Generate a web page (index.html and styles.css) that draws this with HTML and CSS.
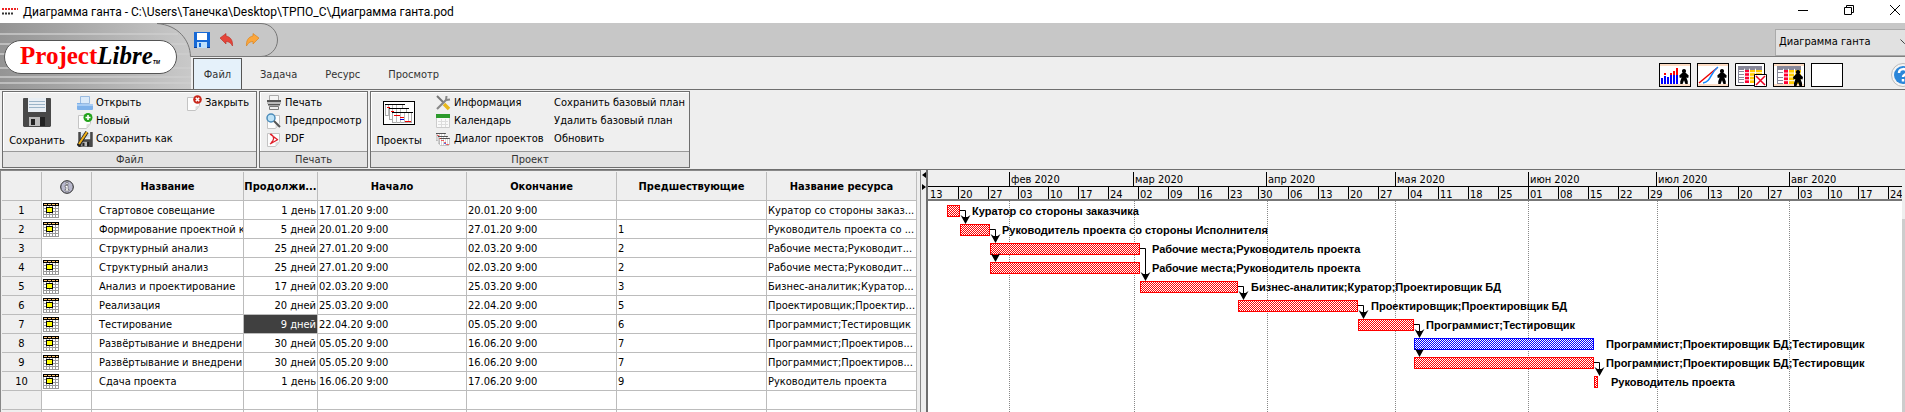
FILE: index.html
```html
<!DOCTYPE html>
<html lang="ru">
<head>
<meta charset="utf-8">
<title>Диаграмма ганта</title>
<link rel="stylesheet" href="styles.css">
</head>
<body>
<svg class="defs" aria-hidden="true">
  <symbol id="cal" viewBox="0 0 16 16"><g shape-rendering="crispEdges"><path fill="#fff" d="M0 3h16v12H0z"/><path fill="#999" d="M0 3h1v12H0zM3 3h1v12H3zM6 3h1v12H6zM9 3h1v12H9zM12 3h1v12h-1zM15 3h1v12h-1zM0 5h16v1H0zM0 8h16v1H0zM0 11h16v1H0zM0 14h16v1H0z"/><path d="M0 0h16v3H0z"/><path fill="#ffc878" d="M1 1h3v1H1zM5 1h3v1H5zM9 1h3v1H9zM13 1h2v1h-2z"/><path d="M3 4h7v6H3z"/><path fill="#ff0" d="M4 5h5v4H4z"/></g></symbol>
  <symbol id="gantts" viewBox="0 0 32 24"><g shape-rendering="crispEdges"><path fill="#fff" stroke="#aaa" d="M2.500 3.500h17v11h-17z"/><path stroke="#bbb" d="M5.500 4v11M9.500 4v11M13.500 4v11"/><path stroke="#000" d="M2 3.500h20"/><path fill="#fff" stroke="#aaa" d="M6.500 7.500h17v11h-17z"/><path stroke="#bbb" d="M9.500 8v11M13.500 8v11M17.500 8v11"/><path stroke="#000" d="M6 7.500h20"/><path fill="#fff" stroke="#aaa" d="M9.500 11.500h19v10h-19z"/><path stroke="#bbb" d="M13.500 12v10M17.500 12v10M21.500 12v10M25.500 12v10"/><path stroke="#000" stroke-width="1" d="M9 11.500h21"/><path stroke="#e00" stroke-width="1" d="M4 6.500h3M8 10.500h3M11 14.500h6M17 16.500h4M22 20.500h6"/><path stroke="#00d" d="M17 18.500h4"/></g></symbol>
  <symbol id="man" viewBox="0 0 10 16"><path d="M5 0a2.200 2.200 0 0 1 1.500 3.800L10 7 9.500 9.500 7.500 9 9 13v3H6.500L5 12l-1.500 4H1v-3l1.500-4-2 .5L0 7l3.500-3.200A2.200 2.200 0 0 1 5 0z"/></symbol>
  <symbol id="sheet" viewBox="0 0 24 19" preserveAspectRatio="none"><g shape-rendering="crispEdges"><path fill="#889" d="M0 0h24v19H0z"/><path fill="#fff" d="M1 4h5v2H1zM1 7h5v2H1zM1 10h5v2H1zM1 13h5v2H1zM1 16h5v2H1z"/><path fill="#f03" d="M7 4h4v15H7z"/><path fill="#fc0" d="M12 4h5v15h-5zM18 4h6v15h-6z"/><path stroke="#fff" d="M6.500 3v16M11.500 3v16M17.500 3v16M7 7.500h17M7 11.500h17M7 15.500h17"/></g></symbol>
  <symbol id="page" viewBox="0 0 16 16"><path fill="#fdfdfd" stroke="#c4c4c4" d="M1.500 2.500h12v8l-4 5h-8z"/><path fill="#ddd" d="M13.500 10.500l-4 5v-4z"/></symbol>
  <symbol id="floppy" viewBox="0 0 28 29"><path fill="#484848" d="M0 1q0-1 1-1h26q1 0 1 1v27l-1 1H1l-1-1z"/><path fill="#e8eef4" d="M5 0h18v14H5z"/><path stroke="#9bb4c8" d="M6 3.500h16M6 6.500h16M6 9.500h16"/><path fill="#bbb" d="M6 19h16v9H6z"/><path fill="#222" d="M8 21h4v6H8zM17 19h5v9h-5z"/></symbol>
</svg>

<header class="titlebar">
  <svg class="appicon" viewBox="0 0 16 10"><path stroke="#e22" stroke-width="2" stroke-dasharray="2 1" d="M0 2h16"/><path stroke="#333" stroke-dasharray="2 1" stroke-width="2" d="M0 6.500h12"/></svg>
  <h1 class="title">Диаграмма ганта - C:\Users\Танечка\Desktop\ТРПО_С\Диаграмма ганта.pod</h1>
  <div class="winbtns">
    <button class="winbtn" aria-label="Свернуть"><svg viewBox="0 0 12 12"><path d="M1 6.500h10"/></svg></button>
    <button class="winbtn" aria-label="Развернуть"><svg viewBox="0 0 12 12"><path d="M1.500 3.500h7v7h-7zM3.500 3V1.500h7v7H9"/></svg></button>
    <button class="winbtn" aria-label="Закрыть"><svg viewBox="0 0 12 12"><path d="M1 1l10 10M11 1L1 11"/></svg></button>
  </div>
</header>

<div class="masthead">
  <svg class="corner" viewBox="0 0 280 66" width="280" height="66" aria-hidden="true">
    <defs><linearGradient id="metal"><stop offset="0" stop-color="#949494"/><stop offset="1" stop-color="#c9c9c9"/></linearGradient></defs>
    <path fill="#c7c7c7" d="M157 .5H261a16.500 16.500 0 0 1 0 33H191Z"/>
    <path fill="url(#metal)" d="M0 0H157C178 2 190 17 191 34V66H0Z"/>
    <path stroke="#cfcfcf" stroke-width="2" opacity=".7" d="M0 11h178M0 21h186M0 31h190M0 45h191M0 54h191M0 60h191"/>
    <path fill="none" stroke="#777" d="M157 .5C178 2 190 17 190.500 33.500H261a16.500 16.500 0 0 0 0-33H157"/>
  </svg>
  <div class="brand"><span class="red">Project</span><span class="ital">Libre</span><small>TM</small></div>
  <div class="bars">
    <div class="quickbar">
      <button class="ico" aria-label="Сохранить"><svg viewBox="0 0 16 16"><path fill="#1769d6" d="M0 0h16v16H0z"/><path fill="#0a3f9b" d="M0 15h16v1H0z"/><path fill="#fff" d="M3 1h10v7H3z"/><path fill="#bfe0fb" d="M3 10h10v6H3z"/><path fill="#1769d6" d="M5 11h2v4H5z"/></svg></button>
      <button class="ico" aria-label="Отменить"><svg viewBox="0 0 16 16"><path fill="#e5453a" stroke="#b92a20" stroke-width=".6" d="M1 6L7 1.500v2.500c5 1 7 5 6.500 10-1.500-3-3.500-4.500-6.500-4.500v2.500z"/></svg></button>
      <button class="ico" aria-label="Повторить"><svg viewBox="0 0 16 16"><path fill="#fba63c" stroke="#d97e12" stroke-width=".6" d="M15 6L9 1.500v2.500C4 5 2 9 2.500 14c1.500-3 3.500-4.500 6.500-4.500v2.500z"/></svg></button>
      <select class="view" aria-label="Вид"><option>Диаграмма ганта</option></select>
    </div>
    <nav class="tabs">
      <button class="tab on">Файл</button><button class="tab">Задача</button><button class="tab">Ресурс</button><button class="tab">Просмотр</button>
      <div class="views">
        <button class="pic" aria-label="Гистограмма"><svg viewBox="0 0 32 24"><path fill="#fff" stroke="#000" stroke-width="2" d="M0 0h32v24H0z"/><path fill="#fcdcc4" d="M1 1h30v2H1zM1 21h30v2H1z"/><path stroke="#00f" stroke-width="2" d="M3 21v-6M6 21v-8M9 21v-7M12 21v-9M15 21v-9M18 21v-9"/><path stroke="#f00" stroke-width="2" d="M6 12v-2M12 12v-2M15 12v-4M18 12V5"/><use href="#man" x="20" y="6" width="10" height="15"/></svg></button>
        <button class="pic" aria-label="Графики"><svg viewBox="0 0 32 24"><path fill="#fff" stroke="#000" stroke-width="2" d="M0 0h32v24H0z"/><path fill="#fcdcc4" d="M1 1h30v2H1zM1 21h30v2H1z"/><path fill="none" stroke="#e00" stroke-width="1.500" d="M2 20L20 5"/><path fill="none" stroke="#18f" stroke-width="1.500" d="M6 20c8-1 7-10 15-16"/><use href="#man" x="20" y="6" width="10" height="15"/></svg></button>
        <button class="pic" aria-label="Скрыть таблицу"><svg viewBox="0 0 32 24"><path fill="#fff" stroke="#000" d="M.5.5h29v22H.5z"/><use href="#sheet" x="3" y="3" width="24" height="17"/><path fill="#fff" stroke="#000" d="M19.500 11.500h12v12h-12z"/><path stroke="#e02" stroke-width="1.500" d="M21 13l9 9M30 13l-9 9"/></svg></button>
        <button class="pic" aria-label="Ресурсы"><svg viewBox="0 0 32 24"><path fill="#fff" stroke="#000" stroke-width="2" d="M0 0h32v24H0z"/><path fill="#fcdcc4" d="M1 1h30v2H1zM1 21h30v2H1z"/><use href="#sheet" x="4" y="3" width="24" height="18"/><use href="#man" x="20" y="7" width="10" height="16"/></svg></button>
        <button class="pic" aria-label="Пусто"><svg viewBox="0 0 32 24"><path fill="#fff" stroke="#000" stroke-width="2" d="M0 0h32v24H0z"/></svg></button>
        <button class="help" aria-label="Справка"><svg viewBox="0 0 24 24"><circle cx="12" cy="12" r="11.500" fill="#f4f4f4" stroke="#bbb"/><circle cx="12" cy="12" r="9" fill="#2b86d9"/><path fill="none" stroke="#fff" stroke-width="2.500" d="M8 10c0-5 8-5 8-1 0 3-4 2-4 5M12 16v2.500"/></svg></button>
      </div>
    </nav>
  </div>
</div>

<div class="ribbon">
  <section class="group">
    <div class="tools">
      <button class="big save"><svg width="28" height="29"><use href="#floppy"/></svg>Сохранить</button>
      <div class="col open">
        <button class="cmd"><svg viewBox="0 0 16 16"><path fill="#dcebfa" stroke="#9bbbe0" d="M3.500 1.500h9v7h-9z"/><path fill="#7fb2ea" d="M0 8h4l1 1h11v5q0 1-1 1H1q-1 0-1-1z"/><path fill="#a9cdf4" d="M0 9h16v2H0z"/></svg>Открыть</button>
        <button class="cmd"><svg viewBox="0 0 16 16"><use href="#page"/><circle cx="11" cy="4.500" r="4.500" fill="#23a31c"/><path stroke="#fff" stroke-width="1.600" d="M11 2v5M8.500 4.500h5"/></svg>Новый</button>
        <button class="cmd"><svg viewBox="0 0 16 16"><use href="#floppy" x="1" y="1" width="15" height="15"/><path stroke="#222" stroke-width="3.500" d="M1 15L10 1"/><path stroke="#f2b21b" stroke-width="2" d="M2 13L10 1"/></svg>Сохранить как</button>
      </div>
      <div class="col">
        <button class="cmd"><svg viewBox="0 0 16 16"><use href="#page"/><circle cx="11.500" cy="4.500" r="4.300" fill="#c8281c"/><path stroke="#fff" stroke-width="1.600" d="M9.800 2.800l3.400 3.400M13.200 2.800L9.800 6.200"/></svg>Закрыть</button>
      </div>
    </div>
    <h2 class="caption">Файл</h2>
  </section>
  <section class="group">
    <div class="tools print">
      <div class="col">
        <button class="cmd"><svg viewBox="0 0 16 16"><path fill="#f4f4f4" stroke="#aaa" d="M3.500.5h9v5h-9z"/><path fill="#555" d="M1 5h14v2H1zM2 9h12v1.500H2z"/><path fill="#bbb" d="M1 7h14v2H1z"/><path fill="#eee" stroke="#777" d="M3.500 11.500h9v3h-9z"/></svg>Печать</button>
        <button class="cmd"><svg viewBox="0 0 16 16"><use href="#page"/><circle cx="5" cy="5" r="4" fill="#bfe3f7" stroke="#4b8cba" stroke-width="1.500"/><path stroke="#555" stroke-width="2" d="M8 8l6 6"/></svg>Предпросмотр</button>
        <button class="cmd"><svg viewBox="0 0 16 16"><use href="#page"/><path fill="none" stroke="#e0202a" stroke-width="1.300" d="M4 3l8 6M12 8.500L4 13M5 3c4 3 3 6 0 9"/></svg>PDF</button>
      </div>
    </div>
    <h2 class="caption">Печать</h2>
  </section>
  <section class="group">
    <div class="tools project">
      <button class="big proj"><svg width="32" height="24" viewBox="0 0 32 24"><path fill="#fff" stroke="#000" stroke-width="2" d="M0 0h32v24H0z"/><use href="#gantts"/></svg>Проекты</button>
      <div class="col info">
        <button class="cmd"><svg viewBox="0 0 16 16"><path stroke="#777" stroke-width="2" d="M2 1l7 7"/><path stroke="#e8b81c" stroke-width="3.500" d="M9 9l5 5"/><path stroke="#888" stroke-width="2.200" d="M2 14L12 4"/><path fill="none" stroke="#888" stroke-width="2" d="M11.500 1L11 5l4-.5"/></svg>Информация</button>
        <button class="cmd"><svg viewBox="0 0 16 16"><path fill="#fafafa" stroke="#ccc" d="M1.500 2.500h13v12h-13z"/><path fill="#2c9a2c" d="M1 1h14v4H1z"/><path stroke="#ddd" d="M3 8.500h10M3 11.500h10M6.500 6v8M10.500 6v8"/></svg>Календарь</button>
        <button class="cmd"><svg viewBox="0 0 32 24" preserveAspectRatio="none"><use href="#gantts"/></svg>Диалог проектов</button>
      </div>
      <div class="col">
        <button class="cmd">Сохранить базовый план</button>
        <button class="cmd">Удалить базовый план</button>
        <button class="cmd">Обновить</button>
      </div>
    </div>
    <h2 class="caption">Проект</h2>
  </section>
</div>

<main class="work">
  <div class="sheetpane">
  <table class="sheet">
    <colgroup><col class="c-num"><col class="c-ind"><col class="c-name"><col class="c-dur"><col class="c-start"><col class="c-wide"><col class="c-wide"><col class="c-wide"></colgroup>
    <thead><tr><th></th><th><svg class="inf" viewBox="0 0 14 14"><circle cx="7" cy="7" r="6.300" fill="#b8b8cc" stroke="#222"/><path fill="#fff" stroke="#555" stroke-width=".6" d="M6 2.500h2v2H6zM5 5.500h3v4h1v1.500H5V9.500h1V7H5z"/></svg></th><th>Название</th><th class="tight">Продолжи...</th><th>Начало</th><th>Окончание</th><th>Предшествующие</th><th>Название ресурса</th></tr></thead>
    <tbody>
    <tr><th>1</th><td><svg class="cal"><use href="#cal"/></svg></td><td class="name">Стартовое совещание</td><td class="dur">1 день</td><td>17.01.20 9:00</td><td>20.01.20 9:00</td><td></td><td>Куратор со стороны заказ...</td></tr>
    <tr><th>2</th><td><svg class="cal"><use href="#cal"/></svg></td><td class="name">Формирование проектной к</td><td class="dur">5 дней</td><td>20.01.20 9:00</td><td>27.01.20 9:00</td><td>1</td><td>Руководитель проекта со ...</td></tr>
    <tr><th>3</th><td></td><td class="name">Структурный анализ</td><td class="dur">25 дней</td><td>27.01.20 9:00</td><td>02.03.20 9:00</td><td>2</td><td>Рабочие места;Руководит...</td></tr>
    <tr><th>4</th><td><svg class="cal"><use href="#cal"/></svg></td><td class="name">Структурный анализ</td><td class="dur">25 дней</td><td>27.01.20 9:00</td><td>02.03.20 9:00</td><td>2</td><td>Рабочие места;Руководит...</td></tr>
    <tr><th>5</th><td><svg class="cal"><use href="#cal"/></svg></td><td class="name">Анализ и проектирование</td><td class="dur">17 дней</td><td>02.03.20 9:00</td><td>25.03.20 9:00</td><td>3</td><td>Бизнес-аналитик;Куратор...</td></tr>
    <tr><th>6</th><td><svg class="cal"><use href="#cal"/></svg></td><td class="name">Реализация</td><td class="dur">20 дней</td><td>25.03.20 9:00</td><td>22.04.20 9:00</td><td>5</td><td>Проектировщик;Проектир...</td></tr>
    <tr><th>7</th><td><svg class="cal"><use href="#cal"/></svg></td><td class="name">Тестирование</td><td class="dur sel">9 дней</td><td>22.04.20 9:00</td><td>05.05.20 9:00</td><td>6</td><td>Программист;Тестировщик</td></tr>
    <tr><th>8</th><td><svg class="cal"><use href="#cal"/></svg></td><td class="name">Развёртывание и внедрени</td><td class="dur">30 дней</td><td>05.05.20 9:00</td><td>16.06.20 9:00</td><td>7</td><td>Программист;Проектиров...</td></tr>
    <tr><th>9</th><td><svg class="cal"><use href="#cal"/></svg></td><td class="name">Развёртывание и внедрени</td><td class="dur">30 дней</td><td>05.05.20 9:00</td><td>16.06.20 9:00</td><td>7</td><td>Программист;Проектиров...</td></tr>
    <tr><th>10</th><td><svg class="cal"><use href="#cal"/></svg></td><td class="name">Сдача проекта</td><td class="dur">1 день</td><td>16.06.20 9:00</td><td>17.06.20 9:00</td><td>9</td><td>Руководитель проекта</td></tr>
    <tr><th></th><td></td><td></td><td></td><td></td><td></td><td></td><td></td></tr>
    <tr><th></th><td></td><td></td><td></td><td></td><td></td><td></td><td></td></tr>
    </tbody>
  </table>
  </div>
  <div class="split"><svg viewBox="0 0 4 18" width="4" height="18"><path d="M4 0v6L0 3zM0 12v6l4-3z"/></svg></div>
  <section class="gantt">
    <div class="chart">
      <div class="scale">
        <div class="months"><span class="m-lead"></span><span class="m-feb">фев 2020</span><span class="m-mar">мар 2020</span><span class="m-apr">апр 2020</span><span class="m-may">мая 2020</span><span class="m-jun">июн 2020</span><span class="m-jul">июл 2020</span><span class="m-aug">авг 2020</span></div>
        <div class="weeks"><span>13</span><span>20</span><span>27</span><span>03</span><span>10</span><span>17</span><span>24</span><span>02</span><span>09</span><span>16</span><span>23</span><span>30</span><span>06</span><span>13</span><span>20</span><span>27</span><span>04</span><span>11</span><span>18</span><span>25</span><span>01</span><span>08</span><span>15</span><span>22</span><span>29</span><span>06</span><span>13</span><span>20</span><span>27</span><span>03</span><span>10</span><span>17</span><span>24</span></div>
      </div>
      <svg class="plot" width="974" height="211" viewBox="0 0 974 211">
        <defs>
          <pattern id="hr" width="2" height="2" patternUnits="userSpaceOnUse"><path fill="#fff" d="M0 0h2v2H0z"/><path fill="#f00" d="M0 0h1v1H0zM1 1h1v1H1z" shape-rendering="crispEdges"/></pattern>
          <pattern id="hb" width="2" height="2" patternUnits="userSpaceOnUse"><path fill="#fff" d="M0 0h2v2H0z"/><path fill="#00f" d="M0 0h1v1H0zM1 1h1v1H1z" shape-rendering="crispEdges"/></pattern>
          <path id="arr" d="M-5-7L-2-5H2L5-7L0 2Z"/>
        </defs>
        <path class="grid" d="M81.500 0v211M206.500 0v211M339.500 0v211M467.500 0v211M600.500 0v211M729.500 0v211M861.500 0v211"/>
        <g class="bar">
          <rect x="19.500" y="4.500" width="12" height="11"/>
          <rect x="32.500" y="23.500" width="29" height="11"/>
          <rect x="62.500" y="42.500" width="149" height="11"/>
          <rect x="62.500" y="61.500" width="149" height="11"/>
          <rect x="212.500" y="80.500" width="97" height="11"/>
          <rect x="310.500" y="99.500" width="119" height="11"/>
          <rect x="430.500" y="118.500" width="55" height="11"/>
          <rect class="free" x="486.500" y="137.500" width="179" height="11"/>
          <rect x="486.500" y="156.500" width="179" height="11"/>
          <rect x="666.500" y="175.500" width="3" height="11"/>
        </g>
        <path class="link" d="M32 9.500h5.500v12M62 28.500h5.500v12M67.500 54v6M212 47.500h5.500v30M310 85.500h5.500v12M430 104.500h5.500v12M486 123.500h5.500v12M491.500 149v6M666 161.500h5.500v12"/>
        <use href="#arr" x="37.500" y="21"/><use href="#arr" x="67.500" y="40"/><use href="#arr" x="67.500" y="59"/><use href="#arr" x="217.500" y="78"/><use href="#arr" x="315.500" y="97"/><use href="#arr" x="435.500" y="116"/><use href="#arr" x="491.500" y="135"/><use href="#arr" x="491.500" y="154"/><use href="#arr" x="671.500" y="173"/>
        <g class="lab">
          <text x="44" y="14">Куратор со стороны заказчика</text>
          <text x="74" y="33">Руководитель проекта со стороны Исполнителя</text>
          <text x="224" y="52">Рабочие места;Руководитель проекта</text>
          <text x="224" y="71">Рабочие места;Руководитель проекта</text>
          <text x="323" y="90">Бизнес-аналитик;Куратор;Проектировщик БД</text>
          <text x="443" y="109">Проектировщик;Проектировщик БД</text>
          <text x="498" y="128">Программист;Тестировщик</text>
          <text x="678" y="147">Программист;Проектировщик БД;Тестировщик</text>
          <text x="678" y="166">Программист;Проектировщик БД;Тестировщик</text>
          <text x="683" y="185">Руководитель проекта</text>
        </g>
      </svg>
    </div>
    <div class="scroll"></div>
  </section>
</main>
</body>
</html>
```
FILE: styles.css
```css
* { box-sizing: border-box; }
html, body { height: 100%; }
body {
  margin: 0;
  display: flex;
  flex-direction: column;
  overflow: hidden;
  background: #eee;
  color: #000;
  font: 11px/16px "DejaVu Sans Condensed", "Noto Sans", sans-serif;
}
.defs { position: absolute; width: 0; height: 0; }
svg { display: block; flex: none; }
button, select { font: inherit; color: inherit; border: 0; padding: 0; background: none; }
h1, h2 { margin: 0; font-weight: normal; }

.titlebar { display: flex; align-items: center; height: 23px; padding-left: 2px; background: #fff; flex: none; }
.appicon { width: 16px; height: 10px; }
.title { flex: 1; padding: 1px 0 0 5px; font: 12px/22px Roboto, "Noto Sans", sans-serif; }
.winbtns { display: flex; gap: 34px; padding: 0 4px 3px 0; }
.winbtn svg { width: 12px; height: 12px; fill: none; stroke: #000; }

.masthead { position: relative; display: flex; height: 67px; flex: none; border-bottom: 1px solid #6e6e6e; overflow: hidden; }
.corner { position: absolute; left: 0; top: 0; z-index: 1; }
.brand {
  position: relative;
  z-index: 2;
  display: flex;
  align-items: baseline;
  width: 173px;
  height: 34px;
  margin: 17px 15px 0 4px;
  padding-left: 15px;
  border: 1px solid #555;
  border-radius: 17px;
  background: #fff;
  font: bold 25px/30px "Liberation Serif", serif;
  flex: none;
}
.red { color: #f00; }
.ital { font-style: italic; }
.brand small { font: italic bold 5px/8px "Liberation Sans", sans-serif; }
.bars { flex: 1; min-width: 0; display: flex; flex-direction: column; }
.quickbar { display: flex; align-items: center; gap: 9px; height: 34px; padding-left: 2px; background: #c7c7c7; border-bottom: 1px solid #808080; flex: none; }
.ico { position: relative; z-index: 2; }
.ico svg { width: 16px; height: 16px; }
.view {
  appearance: none;
  width: 130px;
  height: 27px;
  margin: 5px 0 0 auto;
  padding-left: 3px;
  border: 1px solid #aaa;
  border-right: 0;
  border-radius: 0;
  background: #e1e1e1 url("data:image/svg+xml,%3Csvg xmlns='http://www.w3.org/2000/svg' width='9' height='6'%3E%3Cpath fill='none' stroke='%23444' d='M.5.5l4 4 4-4'/%3E%3C/svg%3E") no-repeat right -4px center;
}
.tabs { display: flex; flex: 1; padding: 1px 0 0 1px; background: #eee; color: #333; }
.tab { padding: 2px 14px 0; }
.tab.on { width: 49px; margin-right: 4px; padding: 1px 0 0; border: solid #555; border-width: 1px 1px 0; background: #e5f1fa; }
.views { display: flex; align-items: center; gap: 6px; padding-top: 3px; margin: 0 -10px 0 auto; }
.pic svg { width: 32px; height: 24px; }
.help { margin-left: 42px; }
.help svg { width: 24px; height: 24px; }

.ribbon { display: flex; gap: 2px; padding: 1px 0 1px 2px; flex: none; }
.group { display: flex; flex-direction: column; border: 1px solid #6e6e6e; background: #efefef; box-shadow: inset 1px 1px #fff; }
.tools { display: flex; align-items: flex-start; height: 59px; padding: 2px 7px 0 7px; }
.col { display: flex; flex-direction: column; align-items: flex-start; }
.cmd { display: flex; align-items: center; gap: 3px; height: 18px; white-space: nowrap; }
.cmd svg { width: 16px; height: 16px; }
.big { display: flex; flex-direction: column; align-items: center; justify-content: space-between; height: 55px; padding-top: 4px; }
.save { width: 54px; margin-right: 13px; }
.proj { width: 46px; padding-top: 7px; margin: 0 13px 0 -2px; }
.open { width: 109px; }
.info { width: 119px; }
.print { padding: 2px 4px 0 6px; }
.print .col { width: 97px; }
.project { padding-right: 4px; }
.caption { border-top: 1px solid #999; background: #e3e3e3; color: #333; font-size: 11px; line-height: 15px; text-align: center; }

.work { display: flex; flex: 1; min-height: 0; border-top: 1px solid #6e6e6e; }
.sheetpane { width: 921px; padding: 1px 0 0 1px; border: solid #888; border-width: 1px 1px 0; flex: none; overflow: hidden; }
.sheet { width: 915px; table-layout: fixed; border-collapse: separate; border-spacing: 0; background: #fff; }
.c-num { width: 40px; }
.c-ind { width: 50px; }
.c-wide { width: 150px; }
.c-name { width: 152px; }
.c-dur { width: 74px; }
.c-start { width: 149px; }
.sheet th, .sheet td { height: 19px; padding: 2px 1px 0; border: solid #bcbcbc; border-width: 0 1px 1px 0; font-weight: normal; line-height: 16px; text-align: left; white-space: nowrap; overflow: hidden; }
.sheet th { background: #efefef; text-align: center; }
.sheet thead th { height: 29px; font: bold 11px/16px "DejaVu Sans Condensed", "Noto Sans", sans-serif; }
.sheet .tight { padding: 2px 0 0; }
.sheet .name { padding: 2px 0 0 7px; }
.sheet .dur { text-align: right; }
.sheet .sel { background: #404040; color: #fff; }
.cal { width: 16px; height: 16px; }
.inf { width: 14px; height: 14px; margin: 0 auto; }

.split { width: 5px; padding: 2px 0 0 1px; flex: none; }
.gantt { flex: 1; min-width: 0; display: flex; border-left: 2px solid #6e6e6e; }
.chart { flex: 1; min-width: 0; overflow: hidden; background: #fff; }
.scale { height: 31px; padding-top: 2px; background: #efefef; border-bottom: 2px solid #777; overflow: hidden; }
.months, .weeks { display: flex; width: 1000px; }
.months { border-bottom: 1px solid #000; }
.months span { flex: none; height: 14px; padding-left: 1px; line-height: 16px; border-left: 1px solid #000; }
.months .m-lead { width: 81px; border: 0; }
.m-feb { width: 124px; }
.m-mar { width: 133px; }
.m-apr { width: 129px; }
.m-may { width: 133px; }
.m-jun { width: 128px; }
.m-jul { width: 133px; }
.m-aug { width: 139px; }
.weeks span { width: 30px; height: 15px; padding-left: 1px; line-height: 16px; border-left: 1px solid #000; flex: none; }
.weeks span:first-child { border-color: transparent; }
.scroll { width: 3px; margin-top: 49px; background: #cdcdcd; flex: none; }
.grid { stroke: #888; stroke-dasharray: 1 1; fill: none; }
.bar rect { fill: url(#hr); stroke: #f00; }
.bar .free { fill: url(#hb); stroke: #00f; }
.link { fill: none; stroke: #000; }
.lab { font: bold 11px "Liberation Sans", Arial, sans-serif; }
```
